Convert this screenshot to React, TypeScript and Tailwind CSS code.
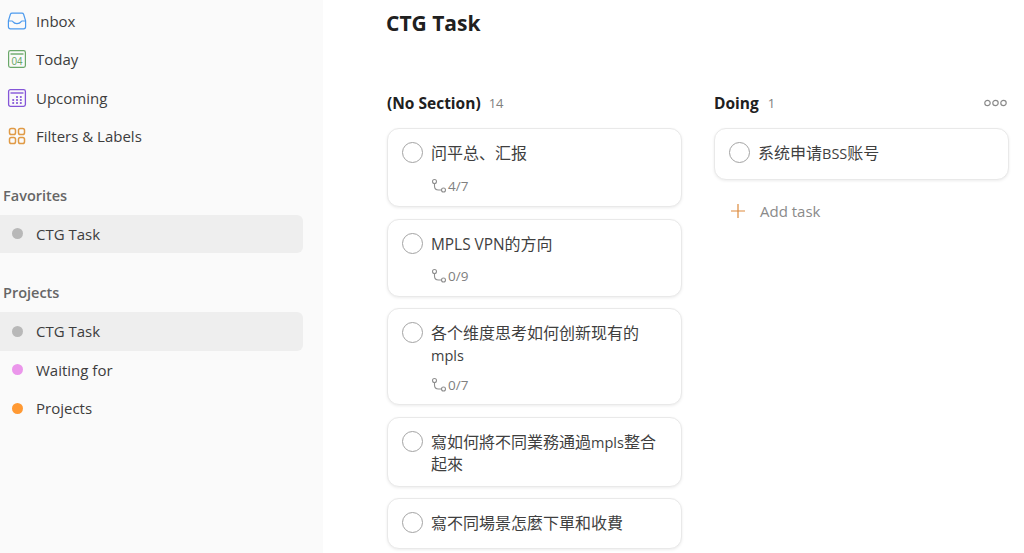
import React from "react";

const FONT = "font-['Open_Sans','Noto_Sans_CJK_SC',sans-serif]";

function InboxIcon() {
  return (
    <svg width="20" height="20" viewBox="0 0 20 20" fill="none" stroke="#4c9aee" strokeWidth="1.2">
      <path d="M5 2.200h10c.8 0 1.300.4 1.600 1.100l2 6.500v6c0 1.200-.8 2-2 2H3.400c-1.200 0-2-.8-2-2v-6l2-6.500C3.700 2.600 4.200 2.200 5 2.200z" />
      <path d="M1.600 10h3.300c.5 0 .8.200 1 .6.800 1.300 2.300 2.100 4.100 2.100s3.300-.8 4.100-2.100c.2-.4.500-.6 1-.6h3.300" strokeLinecap="round" />
    </svg>
  );
}

function TodayIcon() {
  return (
    <svg width="20" height="20" viewBox="0 0 20 20" fill="none">
      <rect x="1.600" y="1.600" width="16.800" height="16.800" rx="1.800" stroke="#6aa869" strokeWidth="1.200" />
      <path d="M3.500 5h13" stroke="#6aa869" strokeWidth="1.400" />
      <text x="10" y="15.500" textAnchor="middle" fontSize="10" fill="#6aa869" fontFamily="'Liberation Sans',sans-serif">04</text>
    </svg>
  );
}

function UpcomingIcon() {
  const dots = [
    [10, 9], [13.800, 9],
    [6.200, 12], [10, 12], [13.800, 12],
    [6.200, 15], [10, 15], [13.800, 15],
  ];
  return (
    <svg width="20" height="20" viewBox="0 0 20 20" fill="none">
      <rect x="1.600" y="1.600" width="16.800" height="16.800" rx="1.800" stroke="#8455d8" strokeWidth="1.300" />
      <path d="M3.500 5h13" stroke="#8455d8" strokeWidth="1.400" />
      {dots.map(([x, y], i) => (
        <rect key={i} x={x - 0.9} y={y - 0.9} width="1.800" height="1.800" fill="#8455d8" />
      ))}
    </svg>
  );
}

function FiltersIcon() {
  return (
    <svg width="20" height="20" viewBox="0 0 20 20" fill="none" stroke="#e09a45" strokeWidth="1.500">
      <rect x="2.500" y="2.500" width="6" height="6" rx="1.800" />
      <rect x="11.500" y="2.500" width="6" height="6" rx="1.800" />
      <rect x="2.500" y="11.500" width="6" height="6" rx="1.800" />
      <rect x="11.500" y="11.500" width="6" height="6" rx="1.800" />
    </svg>
  );
}

function SubtaskIcon() {
  return (
    <svg width="17" height="16" viewBox="0 0 17 16" fill="none" stroke="#8f8f8f" strokeWidth="1.100">
      <circle cx="3.500" cy="3.500" r="2" />
      <circle cx="12.500" cy="12" r="2" />
      <path d="M3.500 5.500V8c0 2.500 1.500 4 4 4h3" />
    </svg>
  );
}

function NavRow({ icon, label }: { icon: React.ReactNode; label: string }) {
  return (
    <div className="flex h-[38.5px] items-center pl-[7px]">
      <span className="flex w-[29px] shrink-0">{icon}</span>
      <span className="text-[15px] text-[#3d3d3d]">{label}</span>
    </div>
  );
}

function ProjectRow({ color, label, active }: { color: string; label: string; active?: boolean }) {
  return (
    <div className={`flex h-[38.5px] w-[303px] items-center rounded-r-[6px] pl-[12px] ${active ? "bg-[#eeeeee]" : ""}`}>
      <span className={`mr-[13px] h-[11px] w-[11px] shrink-0 rounded-full ${color}`} />
      <span className="text-[15px] text-[#3d3d3d]">{label}</span>
    </div>
  );
}

function Task({ title, sub, h, mb, subMt }: { title: React.ReactNode; sub?: string; h: string; mb?: string; subMt?: string }) {
  return (
    <div className={`${h} ${mb ?? ""} box-border flex w-[295px] shrink-0 flex-col rounded-[12px] border border-[#e9e9e9] bg-white pl-[14px] pr-[12px] pt-[13px] shadow-[0_1px_3px_rgba(0,0,0,0.08)]`}>
      <div className="flex items-start">
        <span className="mr-[8px] h-[21px] w-[21px] shrink-0 rounded-full border border-[#a3a3a3]" />
        <div className="mt-[1px] text-[16px] leading-[21.5px] text-[#3f3f3f]">{title}</div>
      </div>
      {sub && (
        <div className={`${subMt ?? "mt-[13px]"} flex items-center pl-[29px] text-[13.500px] leading-[16px] text-[#808080]`}>
          <SubtaskIcon />
          <span>{sub}</span>
        </div>
      )}
    </div>
  );
}

function Latin({ children, size }: { children: React.ReactNode; size: string }) {
  return <span className={size}>{children}</span>;
}

export default function App() {
  return (
    <div className={`${FONT} flex h-[553px] w-[1024px] overflow-hidden bg-white`}>
      <aside className="h-full w-[323px] shrink-0 bg-[#fafafa] pt-[1.500px]">
        <NavRow icon={<InboxIcon />} label="Inbox" />
        <NavRow icon={<TodayIcon />} label="Today" />
        <NavRow icon={<UpcomingIcon />} label="Upcoming" />
        <NavRow icon={<FiltersIcon />} label="Filters & Labels" />
        <div className="mt-[25px] flex h-[30px] items-center pl-[3px] text-[14.500px] font-semibold text-[#666666]">Favorites</div>
        <div className="mt-[4px]">
          <ProjectRow color="bg-[#b8b8b8]" label="CTG Task" active />
        </div>
        <div className="mt-[25px] flex h-[30px] items-center pl-[3px] text-[14.500px] font-semibold text-[#666666]">Projects</div>
        <div className="mt-[4px]">
          <ProjectRow color="bg-[#b8b8b8]" label="CTG Task" active />
          <ProjectRow color="bg-[#eb96eb]" label="Waiting for" />
          <ProjectRow color="bg-[#ff9933]" label="Projects" />
        </div>
      </aside>
      <main className="min-w-0 flex-1 pl-[63px]">
        <h1 className="mt-[7px] h-[32px] text-[21px] font-bold leading-[32px] text-[#202020]">CTG Task</h1>
        <div className="mt-[54px] flex gap-[32px]">
          <section className="flex w-[296px] flex-col pl-[1px]">
            <div className="mb-[13px] flex h-[22px] items-center">
              <span className="text-[15.500px] font-bold text-[#202020]">(No Section)</span>
              <span className="ml-[8px] text-[13px] text-[#808080]">14</span>
            </div>
            <Task h="h-[79px]" mb="mb-[12px]" subMt="mt-[13px]" title="问平总、汇报" sub="4/7" />
            <Task h="h-[78px]" mb="mb-[11px]" subMt="mt-[12px]" title={<><Latin size="text-[15.400px]">MPLS VPN</Latin>的方向</>} sub="0/9" />
            <Task h="h-[97px]" mb="mb-[12px]" subMt="mt-[11px]" title={<>各个维度思考如何创新现有的<br /><Latin size="text-[14.500px]">mpls</Latin></>} sub="0/7" />
            <Task h="h-[70px]" mb="mb-[11px]" title={<>寫如何將不同業務通過<Latin size="text-[14.500px]">mpls</Latin>整合<br />起來</>} />
            <Task h="h-[51px]" title="寫不同場景怎麼下單和收費" />
          </section>
          <section className="flex w-[295px] flex-col">
            <div className="mb-[13px] flex h-[22px] items-center">
              <span className="text-[15.500px] font-bold text-[#202020]">Doing</span>
              <span className="ml-[9px] text-[13px] text-[#808080]">1</span>
              <svg className="mb-[2px] ml-auto mr-[2px]" width="23" height="8" viewBox="0 0 23 8" fill="none" stroke="#8a8a8a" strokeWidth="1.200">
                <circle cx="3.500" cy="4" r="2.700" />
                <circle cx="11.500" cy="4" r="2.700" />
                <circle cx="19.500" cy="4" r="2.700" />
              </svg>
            </div>
            <Task h="h-[52px]" title={<>系统申请<Latin size="text-[14.500px]">BSS</Latin>账号</>} />
            <div className="mt-[19px] flex h-[24px] items-center pl-[16px]">
              <svg width="16" height="16" viewBox="0 0 16 16" stroke="#dd8a3c" strokeWidth="1.200">
                <path d="M8 1v14M1 8h14" />
              </svg>
              <span className="ml-[14px] text-[15px] text-[#8a8a8a]">Add task</span>
            </div>
          </section>
        </div>
      </main>
    </div>
  );
}
